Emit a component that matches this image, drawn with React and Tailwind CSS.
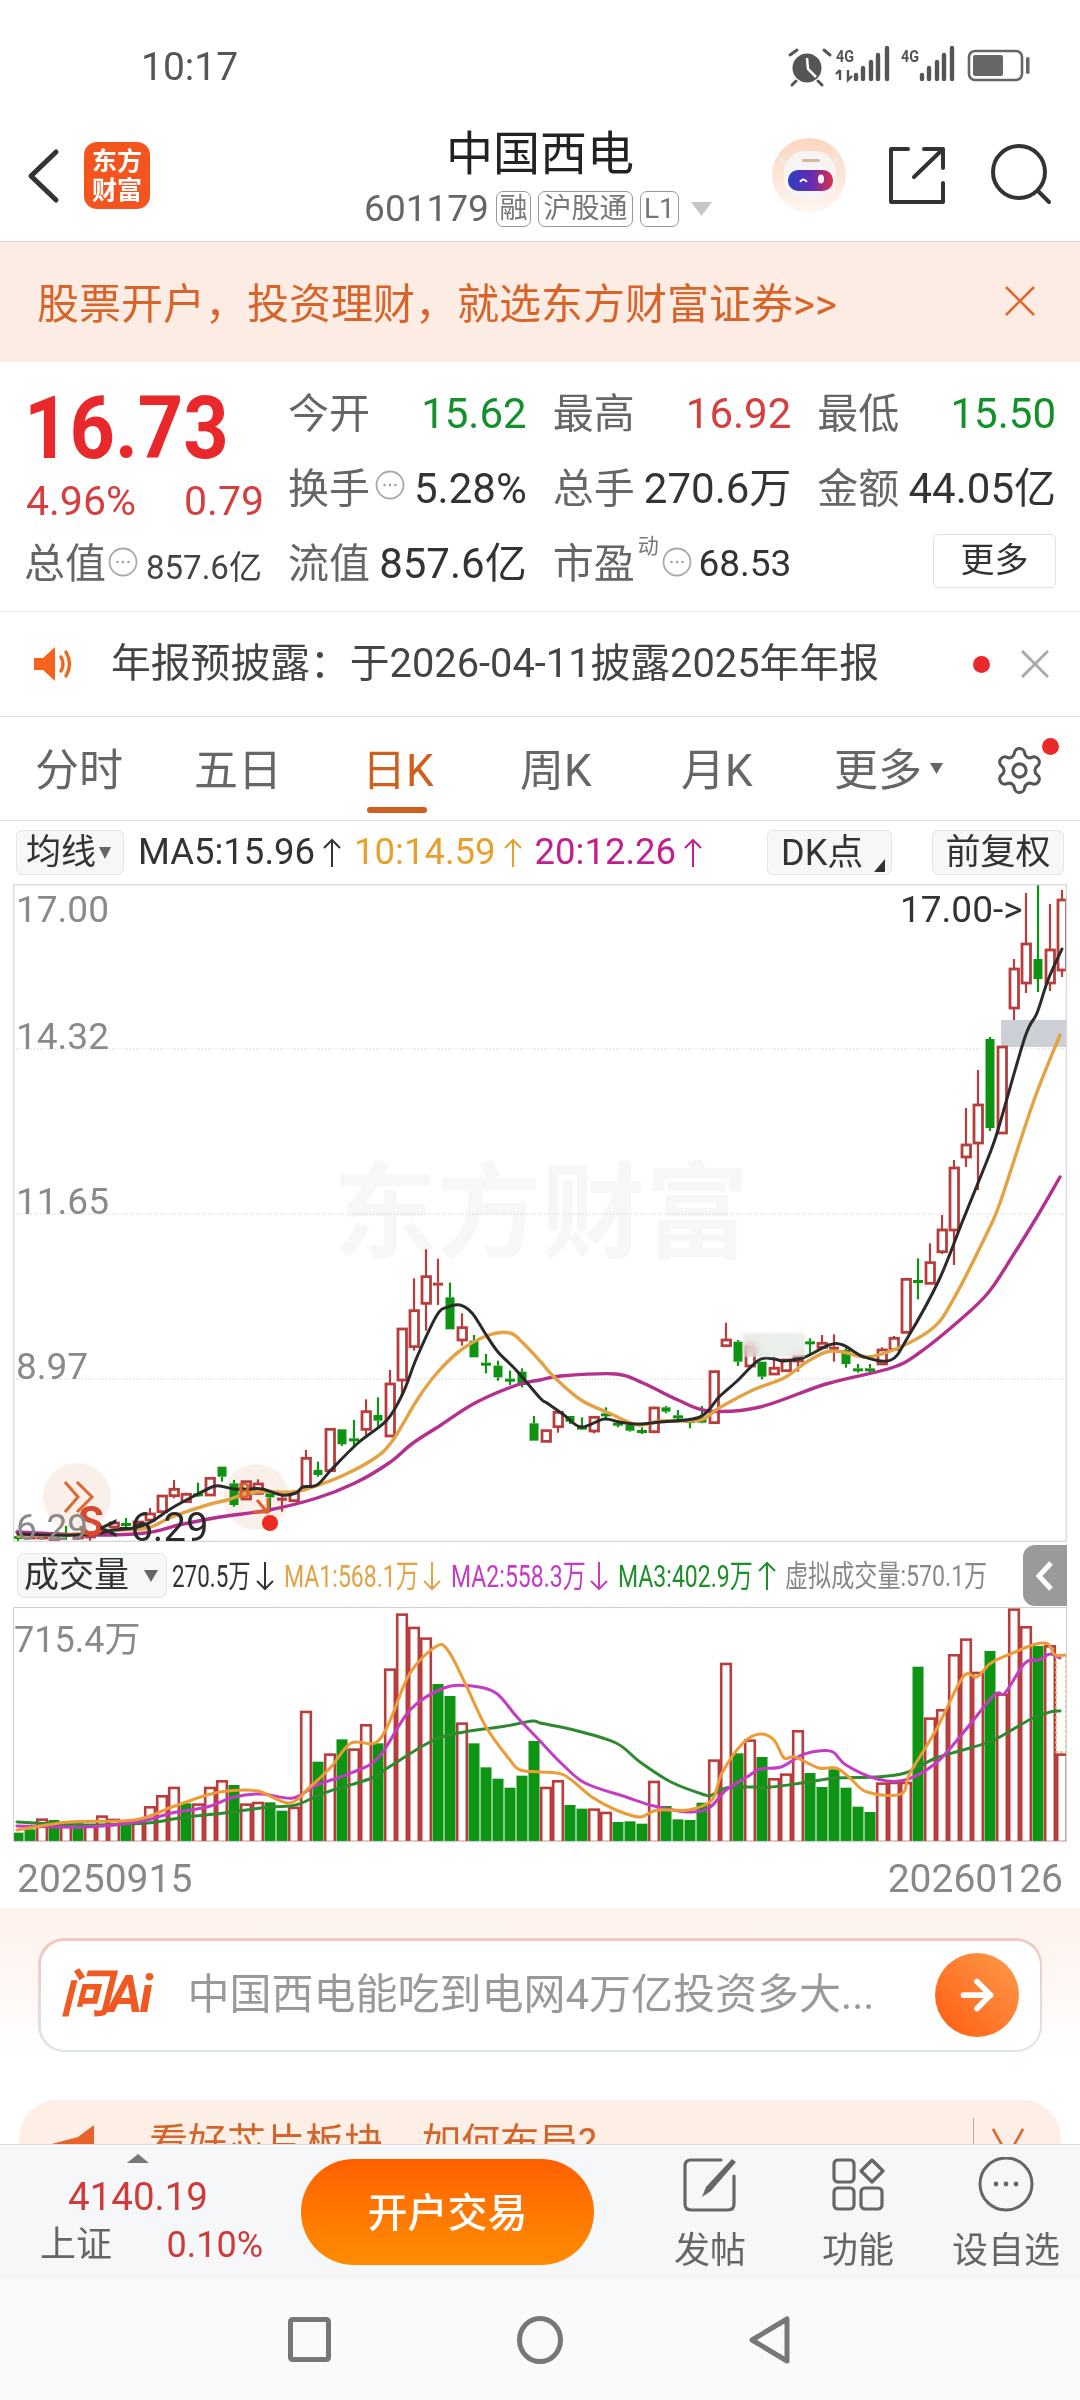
import React from "react";
import { Settings, ArrowRight } from "lucide-react";

const RED = "#b93d3c";
const GREEN = "#0d9412";
const cx = (i) => 18 + 12 * i;
const Z = (z) => 1200 + z / 3;

// [index, type, wickTop, bodyTop, bodyBottom, wickBottom] in real px
const early = [
  [0,"g",1530,1536,1538,1542],[1,"r",1532,1533,1538,1539],[2,"r",1533,1534,1538,1540],[3,"r",1533,1534,1540,1541],
  [4,"g",1526,1534,1537,1540],[5,"r",1534,1534,1538,1540],[6,"r",1533,1533,1537,1543],[7,"r",1530,1530,1534,1535],
  [8,"r",1523,1523,1527,1528],[9,"g",1518,1523,1525,1528],[10,"r",1522,1522,1527,1528],[11,"r",1508,1514,1520,1521],
];
const midZ = [
  [12,"r",888,888,935,935],[13,"r",840,868,887,895],[14,"r",878,883,905,905],[15,"g",848,880,885,890],[16,"r",835,835,885,885],
  [17,"g",800,800,830,845],[18,"g",840,850,915,920],[19,"r",845,845,897,897],[20,"r",838,852,880,885],[21,"g",880,880,892,935],
  [22,"r",880,893,900,935],[23,"r",870,878,902,905],[24,"r",750,775,860,860],[25,"g",785,810,825,830],[26,"r",688,688,812,812],
  [27,"g",688,688,733,738],[28,"g",660,715,722,740],[29,"r",598,635,688,705],[30,"g",592,645,662,680],[31,"r",510,552,708,710],
  [32,"r",387,387,540,590],[33,"r",235,332,440,452],[34,"r",148,230,310,392],[35,"r",176,248,256,315],[36,"g",248,292,388,388],
  [37,"r",340,383,420,437],[38,"g",405,422,472,472],[39,"g",462,488,492,520],[40,"g",482,497,532,542],[41,"g",512,536,540,555],
  [42,"g",505,515,555,562],[43,"g",648,670,722,722],[44,"r",692,692,724,724],[45,"r",637,637,680,698],[46,"g",648,648,665,672],
  [47,"g",652,680,684,688],[48,"r",648,652,693,700],[49,"g",622,640,645,655],[50,"g",660,668,672,682],[51,"g",672,675,692,695],
  [52,"g",682,690,694,702],[53,"r",620,624,695,700],[54,"g",618,622,635,640],[55,"g",630,646,650,660],[56,"g",655,660,663,685],
  [57,"g",618,655,668,670],[58,"r",515,515,668,668],[59,"r",368,420,437,437],[60,"g",420,425,485,498],[61,"r",440,440,498,498],
  [62,"g",485,485,530,538],[63,"r",470,505,522,522],[64,"r",480,480,512,512],[65,"r",470,470,483,515],[66,"g",415,424,428,468],
  [67,"r",405,430,442,445],[68,"r",403,440,446,485],[69,"g",445,450,492,503],[70,"g",492,505,509,518],[71,"g",492,505,509,522],
  [72,"r",442,450,492,492],[73,"r",408,415,448,448],[74,"r",238,238,397,397],[75,"g",175,240,244,298],[76,"r",130,188,250,250],
  [77,"r",45,90,155,162],
];
const late = [
  [78,"r",1160,1168,1230,1265],[79,"r",1108,1145,1157,1167],[80,"r",1070,1105,1143,1190],[81,"g",1037,1039,1128,1131],
  [82,"r",1047,1047,1133,1133],[83,"r",959,969,1008,1020],[84,"r",893,944,983,993],[85,"g",885,959,979,992],
  [86,"r",904,950,983,991],[87,"r",890,900,970,977],
];
const candles = [...early, ...midZ.map(([i, t, a, b, c, d]) => [i, t, Z(a), Z(b), Z(c), Z(d)]), ...late];

const volumes = [
  ["g",878],["g",868],["r",835],["g",840],["r",855],["g",850],["r",855],["r",826],["r",836],["g",845],["r",845],["r",798],
  ["r",765],["r",740],["g",790],["r",790],["r",740],["r",720],["g",735],["r",790],["r",785],["g",787],["g",812],["r",800],
  ["r",512],["g",665],["r",640],["g",598],["r",625],["r",552],["g",610],["r",385],["r",220],["r",260],["r",292],["g",432],
  ["g",468],["r",547],["g",610],["g",682],["g",716],["g",743],["g",707],["g",603],["r",740],["r",720],["g",795],["g",806],
  ["r",805],["r",815],["g",846],["g",844],["g",851],["r",722],["g",798],["g",838],["g",840],["g",788],["r",658],["r",368],
  ["g",640],["r",598],["g",651],["r",714],["r",700],["r",570],["g",699],["g",741],["g",688],["g",743],["g",800],["g",816],
  ["r",727],["r",725],["r",725],["g",380],["r",532],["r",507],["r",342],["r",295],["r",395],["g",333],["r",460],["r",205],
  ["r",258],["g",318],["r",315],["r",640],
];

const black = [[18,1534],[60,1535],[95,1534],[113,1530],[134,1528],[151,1522],[172,1508],[196,1495],[212,1487],[220,1486],[234,1489],[248,1489],[262,1489],[282,1495],[296,1493],[303,1487],[317,1485],[331,1470],[358,1443],[387,1420],[403,1393],[417,1357],[437,1315],[448,1307],[460,1305],[472,1313],[485,1333],[498,1352],[516,1370],[540,1398],[547,1403],[564,1415],[581,1427],[604,1419],[619,1422],[638,1424],[660,1422],[700,1417],[719,1397],[736,1382],[759,1360],[774,1359],[784,1361],[805,1357],[829,1345],[843,1345],[864,1357],[891,1360],[908,1337],[939,1280],[963,1220],[990,1153],[1000,1123],[1025,1037],[1037,1013],[1048,980],[1062,949]];
const orange = [[18,1536],[80,1534],[120,1530],[148,1528],[172,1517],[207,1505],[227,1500],[255,1492],[293,1492],[310,1488],[344,1475],[375,1458],[393,1440],[417,1400],[437,1373],[461,1350],[489,1335],[510,1333],[523,1343],[540,1361],[554,1377],[581,1400],[609,1413],[638,1425],[660,1421],[700,1420],[719,1408],[753,1390],[784,1378],[805,1363],[826,1352],[843,1352],[867,1357],[898,1348],[933,1328],[953,1300],[988,1231],[1001,1200],[1033,1103],[1060,1035]];
const magenta = [[17,1532],[90,1535],[145,1533],[179,1525],[220,1517],[269,1510],[317,1498],[355,1483],[389,1463],[413,1443],[441,1425],[475,1403],[517,1385],[540,1380],[561,1376],[616,1374],[643,1383],[678,1400],[709,1411],[760,1407],[826,1384],[891,1368],[919,1353],[960,1320],[988,1293],[1012,1257],[1035,1220],[1060,1177]];

const vOrange = [[17,1830],[69,1822],[134,1820],[172,1807],[207,1795],[227,1791],[258,1791],[289,1803],[310,1787],[331,1767],[351,1743],[375,1743],[389,1723],[410,1673],[437,1646],[449,1652],[465,1683],[486,1727],[510,1760],[520,1770],[540,1772],[564,1775],[592,1797],[616,1810],[640,1817],[657,1810],[688,1810],[712,1800],[722,1773],[743,1743],[760,1734],[774,1740],[784,1758],[795,1757],[819,1768],[836,1768],[850,1778],[867,1792],[901,1794],[910,1773],[936,1730],[963,1677],[977,1677],[991,1663],[1015,1652],[1036,1644],[1048,1644],[1055,1655],[1065,1655]];
const vMagenta = [[17,1826],[86,1827],[138,1822],[172,1813],[207,1807],[234,1797],[262,1794],[293,1798],[317,1785],[351,1773],[379,1757],[410,1710],[444,1688],[472,1686],[496,1693],[517,1717],[540,1741],[561,1763],[585,1783],[626,1797],[654,1806],[688,1812],[709,1808],[726,1790],[747,1777],[760,1769],[781,1767],[802,1755],[819,1751],[833,1752],[846,1765],[877,1779],[905,1780],[936,1763],[963,1733],[994,1695],[1005,1693],[1025,1663],[1039,1660],[1050,1654],[1060,1658]];
const vGreen = [[17,1822],[86,1825],[148,1823],[179,1818],[224,1813],[269,1807],[296,1805],[324,1793],[372,1778],[389,1767],[430,1742],[458,1733],[506,1726],[532,1721],[540,1723],[550,1725],[574,1730],[616,1743],[640,1762],[671,1782],[705,1795],[712,1795],[726,1788],[753,1787],[771,1787],[802,1783],[836,1778],[874,1777],[905,1773],[936,1758],[963,1750],[994,1740],[1029,1720],[1050,1712],[1060,1711]];

function smooth(p) {
  let d = `M${p[0][0]} ${p[0][1]}`;
  for (let i = 0; i < p.length - 1; i++) {
    const a = p[Math.max(i - 1, 0)], b = p[i], c = p[i + 1], e = p[Math.min(i + 2, p.length - 1)];
    const c1x = b[0] + (c[0] - a[0]) / 6, c1y = b[1] + (c[1] - a[1]) / 6;
    const c2x = c[0] - (e[0] - b[0]) / 6, c2y = c[1] - (e[1] - b[1]) / 6;
    d += `C${c1x.toFixed(1)} ${c1y.toFixed(1)} ${c2x.toFixed(1)} ${c2y.toFixed(1)} ${c[0]} ${c[1]}`;
  }
  return d;
}

function Line({ pts, color, w = 3.4 }) {
  return <path d={smooth(pts)} fill="none" stroke={color} strokeWidth={w} strokeLinecap="round" strokeLinejoin="round" />;
}

function Candle({ c }) {
  const [i, t, wt, bt, bb, wb] = c;
  const x = cx(i);
  const color = t === "r" ? RED : GREEN;
  const thin = bb - bt < 4;
  return (
    <g>
      <line x1={x} x2={x} y1={wt} y2={Math.max(bt, wt)} stroke={color} strokeWidth="2.2" />
      <line x1={x} x2={x} y1={bb} y2={wb} stroke={color} strokeWidth="2.2" />
      {thin ? (
        <rect x={x - 5} y={bt} width="10" height={Math.max(bb - bt, 3)} fill={color} />
      ) : t === "r" ? (
        <rect x={x - 4} y={bt} width="8.5" height={bb - bt} fill="#fff" stroke={color} strokeWidth="2.8" />
      ) : (
        <rect x={x - 4.5} y={bt} width="9" height={bb - bt} fill={color} />
      )}
    </g>
  );
}

function PriceSvg() {
  return (
    <svg className="absolute left-0 top-0" width="1054" height="658" viewBox="13 884 1054 658">
      {[1049, 1214, 1379].map((y) => (
        <line key={y} x1="13" x2="1067" y1={y} y2={y} stroke="#cccccc" strokeWidth="1.2" strokeDasharray="1 2" />
      ))}
      <circle cx="77" cy="1497" r="34" fill="#fbefe9" />
      <circle cx="256" cy="1497" r="33" fill="#fbefe9" />
      <path d="M65 1482L78 1497L65 1512M77 1482L92 1497L77 1512" fill="none" stroke="#d96a33" strokeWidth="3" />
      <rect x="1001" y="1020" width="66" height="27" fill="#ccd0d6" />
      {candles.map((c) => <Candle key={c[0]} c={c} />)}
      <Line pts={magenta} color="#b3308f" />
      <Line pts={orange} color="#e3a244" />
      <Line pts={black} color="#2a2a2a" w={3} />
      <path d="M257 1500L268 1513M253 1512H268V1498" fill="none" stroke="#e0602a" strokeWidth="3" />
      <circle cx="270" cy="1523" r="8" fill="#ee2a22" />
      <rect x="13.5" y="884.5" width="1053" height="657" fill="none" stroke="#d8d8d8" strokeWidth="1.6" />
    </svg>
  );
}

function VolumeSvg() {
  const yb = 1842;
  return (
    <svg className="absolute left-0 top-0" width="1054" height="235" viewBox="13 1607 1054 235">
      {volumes.map(([t, z], i) => {
        const top = 1540 + z / 3;
        const x = cx(i);
        return t === "g" ? (
          <rect key={i} x={x - 5.5} y={top} width="11" height={yb - top} fill={GREEN} />
        ) : (
          <rect key={i} x={x - 4.8} y={top + 1.3} width="9.6" height={yb - top - 1.3} fill="#fff" stroke={RED} strokeWidth="2.6" />
        );
      })}
      <rect x="1056" y="1655" width="10" height="97" fill="none" stroke="#e8b25a" strokeWidth="1.5" strokeDasharray="3 2" />
      <Line pts={vGreen} color="#2f8a2f" w={3} />
      <Line pts={vMagenta} color="#c43cc4" w={3} />
      <Line pts={vOrange} color="#ee9a35" w={3} />
      <rect x="13.5" y="1607.5" width="1053" height="234" fill="none" stroke="#cfcfcf" strokeWidth="1.2" />
    </svg>
  );
}

function StatusIcons() {
  const bars1 = [[856, 75], [863, 68], [871, 62], [878, 55], [887, 48]];
  const bars2 = [[922, 75], [929, 68], [937, 62], [944, 55], [952, 48]];
  return (
    <svg className="shrink-0" width="260" height="50" viewBox="780 40 260 50">
      <circle cx="807" cy="68" r="14.5" fill="#555" />
      <path d="M807 58L808 69L816 77" fill="none" stroke="#fff" strokeWidth="2.5" />
      <path d="M790 55L797 50M824 50L830 55M796 81L792 85M818 81L822 85" stroke="#555" strokeWidth="3" strokeLinecap="round" />
      <text x="836" y="62" fontSize="17" fontWeight="700" fill="#555" textLength="18" lengthAdjust="spacingAndGlyphs" fontFamily="Roboto">4G</text>
      <text x="901" y="62" fontSize="17" fontWeight="700" fill="#555" textLength="18" lengthAdjust="spacingAndGlyphs" fontFamily="Roboto">4G</text>
      <path d="M840 70V80M836 74L840 70M848 70V80L852 76" fill="none" stroke="#555" strokeWidth="2.4" />
      {[...bars1, ...bars2].map(([x, y]) => (
        <line key={x} x1={x} x2={x} y1={y} y2="79" stroke="#555" strokeWidth="4.4" strokeLinecap="round" />
      ))}
      <rect x="969" y="51" width="53" height="29" rx="6" fill="none" stroke="#666" strokeWidth="2.6" />
      <rect x="973" y="55" width="30" height="21" rx="2" fill="#666" />
      <rect x="1026" y="57" width="3.5" height="17" rx="1.7" fill="#666" />
    </svg>
  );
}

function Robot() {
  return (
    <svg className="shrink-0" width="76" height="76" viewBox="771 137 76 76">
      <defs>
        <linearGradient id="rbg" x1="0" y1="0" x2="0" y2="1">
          <stop offset="0" stopColor="#fbd6bf" />
          <stop offset="1" stopColor="#fef6f1" />
        </linearGradient>
        <linearGradient id="vis" x1="0" y1="0" x2="1" y2="0">
          <stop offset="0" stopColor="#2c3fc0" />
          <stop offset="0.55" stopColor="#6a2ab0" />
          <stop offset="1" stopColor="#e0304a" />
        </linearGradient>
      </defs>
      <circle cx="809" cy="175" r="37" fill="url(#rbg)" />
      <path d="M780 158L787 167M838 158L831 167" stroke="#eeeae8" strokeWidth="4" />
      <rect x="784" y="151" width="52" height="48" rx="21" fill="#f7f5f4" />
      <rect x="802" y="159" width="18" height="3" rx="1.5" fill="#d8b49a" />
      <rect x="788" y="170" width="45" height="21" rx="10" fill="url(#vis)" />
      <path d="M800 182Q803 177 807 182" fill="none" stroke="#fff" strokeWidth="1.8" />
      <ellipse cx="821" cy="179" rx="3" ry="4.5" fill="#fff" />
    </svg>
  );
}

function Dots({ cls = "w-[30px] h-[30px]" }) {
  return (
    <svg className={`shrink-0 ${cls}`} viewBox="0 0 30 30">
      <circle cx="15" cy="15" r="13.5" fill="none" stroke="#aaa" strokeWidth="1.8" />
      <circle cx="9.5" cy="15" r="1.2" fill="#999" />
      <circle cx="15" cy="15" r="1.2" fill="#999" />
      <circle cx="20.5" cy="15" r="1.2" fill="#999" />
    </svg>
  );
}

function Arrow({ color, up = true, cls = "" }) {
  return (
    <svg className={`shrink-0 ${cls}`} width="20" height="30" viewBox="0 0 20 30">
      {up ? (
        <path d="M10 29V2M2 10L10 2L18 10" fill="none" stroke={color} strokeWidth="2" />
      ) : (
        <path d="M10 1V28M2 20L10 28L18 20" fill="none" stroke={color} strokeWidth="2" />
      )}
    </svg>
  );
}

function Stat({ label, value, color = "text-[#333]", icon = false, size = "text-[42px]" }) {
  return (
    <div className="flex h-[75px] items-center justify-between">
      <div className="flex items-start">
        <span className="whitespace-nowrap text-[41px] leading-[50px] text-[#666]">{label}</span>
        {icon && <Dots cls="w-[30px] h-[30px] ml-[5px] mt-[6px]" />}
      </div>
      <span className={`whitespace-nowrap leading-[50px] ${size} ${color}`}>{value}</span>
    </div>
  );
}

function Badge({ children, cls }) {
  return (
    <span className={`flex h-[36px] items-center justify-center rounded-[7px] border border-[#999] text-[28px] leading-none text-[#777] ${cls}`}>
      {children}
    </span>
  );
}

function Condensed({ w, children, color, scale = "scale-x-[0.72]", size = "text-[32px]", cls = "" }) {
  return (
    <span className={`block shrink-0 ${cls}`} style={{ width: w }}>
      <span className={`inline-block origin-left whitespace-nowrap leading-[40px] ${scale} ${size} ${color}`}>{children}</span>
    </span>
  );
}

export default function App() {
  return (
    <div className="flex h-[2400px] w-[1080px] flex-col overflow-hidden bg-white [font-family:Roboto,'Noto_Sans_CJK_SC',sans-serif]">
      {/* status bar */}
      <div className="flex h-[126px] shrink-0 items-start justify-between pl-[141px] pr-[40px] pt-[40px]">
        <span className="pt-[4px] text-[39px] leading-[46px] text-[#555]">10:17</span>
        <StatusIcons />
      </div>

      {/* header */}
      <div className="flex h-[116px] shrink-0 border-b border-[#d9d9d9]">
        <div className="flex w-[240px] shrink-0 items-center pb-[16px] pl-[27px]">
          <svg className="shrink-0" width="33" height="56" viewBox="0 0 33 56">
            <path d="M29 4L4 28L29 52" fill="none" stroke="#333" strokeWidth="5" strokeLinecap="round" strokeLinejoin="round" />
          </svg>
          <div className="ml-[24px] flex h-[67px] w-[66px] shrink-0 flex-col items-center justify-center rounded-[13px] bg-[#f4551e] text-[25px] font-bold leading-[29px] text-white">
            <span>东方</span>
            <span>财富</span>
          </div>
        </div>
        <div className="flex w-[600px] shrink-0 flex-col items-center">
          <span className="text-[47px] leading-[56px] text-[#222]">中国西电</span>
          <div className="mt-[9px] flex -translate-x-[2px] items-center">
            <span className="text-[37px] leading-[36px] text-[#666]">601179</span>
            <Badge cls="ml-[7px] w-[35px]">融</Badge>
            <Badge cls="ml-[7px] w-[95px]">沪股通</Badge>
            <Badge cls="ml-[7px] w-[39px]">L1</Badge>
            <svg className="ml-[12px] shrink-0" width="21" height="14" viewBox="0 0 21 14"><path d="M0 0H21L10.5 14Z" fill="#c6c6c6" /></svg>
          </div>
        </div>
        <div className="-ml-[69px] flex w-[309px] shrink-0 items-start pt-[11px]">
          <Robot />
          <svg className="ml-[40px] mt-[9px] shrink-0" width="60" height="60" viewBox="887 146 60 60">
            <path d="M908 149H891V202H943V183M914 177L943 149M924 149H943V168" fill="none" stroke="#333" strokeWidth="4" strokeLinecap="round" strokeLinejoin="round" />
          </svg>
          <svg className="ml-[43px] mt-[6px] shrink-0" width="62" height="62" viewBox="990 143 62 62">
            <circle cx="1019" cy="172" r="26" fill="none" stroke="#333" strokeWidth="4" />
            <path d="M1038 191L1049 202" stroke="#333" strokeWidth="4" strokeLinecap="round" />
          </svg>
        </div>
      </div>

      {/* banner */}
      <div className="flex h-[120px] shrink-0 items-center justify-between bg-[#fcece4] pl-[37px] pr-[44px] pt-[5px]">
        <span className="whitespace-nowrap text-[42px] leading-[50px] text-[#d9642a]">股票开户，投资理财，就选东方财富证券&gt;&gt;</span>
        <svg className="mb-[8px] shrink-0" width="32" height="32" viewBox="0 0 32 32">
          <path d="M2 2L30 30M30 2L2 30" stroke="#e0682e" strokeWidth="2.6" />
        </svg>
      </div>

      {/* quote */}
      <div className="flex h-[250px] shrink-0 items-start border-b border-[#e4e4e4] pl-[26px] pt-[14px]">
        <div className="w-[262px] shrink-0">
          <div className="-ml-[2px] mt-[5px] h-[94px] origin-left scale-x-[0.9] whitespace-nowrap text-[88px] font-bold leading-[94px] text-[#e8282a]">16.73</div>
          <div className="mt-[4px] flex w-[238px] justify-between text-[41px] leading-[44px] text-[#d43f3f]">
            <span>4.96%</span>
            <span>0.79</span>
          </div>
          <div className="-ml-[2px] mt-[16px] flex items-start">
            <span className="text-[41px] leading-[50px] text-[#666]">总值</span>
            <Dots cls="w-[30px] h-[30px] ml-[2px] mt-[8px]" />
            <span className="ml-[8px] mt-[4px] whitespace-nowrap text-[33px] leading-[50px] text-[#444]">857.6亿</span>
          </div>
        </div>
        <div className="grid w-[768px] shrink-0 grid-cols-3 content-start gap-x-[26px]">
          <Stat label="今开" value="15.62" color="text-[#12912b]" />
          <Stat label="最高" value="16.92" color="text-[#d44040]" />
          <Stat label="最低" value="15.50" color="text-[#12912b]" />
          <Stat label="换手" value="5.28%" icon />
          <Stat label="总手" value="270.6万" />
          <Stat label="金额" value="44.05亿" />
          <Stat label="流值" value="857.6亿" />
          <div className="flex h-[75px] items-center justify-between">
            <div className="flex items-start">
              <span className="text-[41px] leading-[50px] text-[#666]">市盈</span>
              <span className="-mt-[7px] ml-[3px] text-[21px] leading-[28px] text-[#777]">动</span>
              <Dots cls="w-[30px] h-[30px] ml-[3px] mt-[8px]" />
            </div>
            <span className="text-[37px] leading-[50px] text-[#333]">68.53</span>
          </div>
          <div className="-mt-[3px] flex h-[75px] items-center justify-end">
            <span className="flex h-[54px] w-[123px] items-center justify-center rounded-[5px] border border-[#e2e2e2] text-[34px] text-[#333]">更多</span>
          </div>
        </div>
      </div>

      {/* notice */}
      <div className="flex h-[105px] shrink-0 items-center border-b border-[#dedede] pl-[34px] pr-[31px]">
        <svg className="shrink-0" width="44" height="36" viewBox="0 0 44 36">
          <path d="M0 12H9L21 1V35L9 24H0Z" fill="#f4641d" />
          <path d="M27 11Q31 18 27 25M32 6Q39 18 32 30" fill="none" stroke="#f4641d" strokeWidth="3.4" strokeLinecap="round" />
        </svg>
        <span className="ml-[33px] whitespace-nowrap text-[39.8px] leading-[50px] text-[#444]">年报预披露：于2026-04-11披露2025年年报</span>
        <span className="ml-auto h-[17px] w-[17px] shrink-0 rounded-full bg-[#e82a2a]" />
        <svg className="ml-[31px] shrink-0" width="28" height="28" viewBox="0 0 28 28">
          <path d="M1 1L27 27M27 1L1 27" stroke="#aaa" strokeWidth="3" />
        </svg>
      </div>

      {/* tabs */}
      <div className="flex h-[104px] shrink-0 border-b border-[#dedede] pl-[35px] pt-[23px] text-[44px] leading-[62px] text-[#666]">
        <span className="w-[159px] shrink-0">分时</span>
        <span className="w-[168px] shrink-0">五日</span>
        <div className="flex w-[158px] shrink-0 flex-col items-start">
          <span className="text-[#cf5f1e]">日K</span>
          <span className="ml-[5px] mt-[5px] h-[6px] w-[60px] rounded-full bg-[#cf5f1e]" />
        </div>
        <span className="w-[161px] shrink-0">周K</span>
        <span className="w-[153px] shrink-0">月K</span>
        <span className="whitespace-nowrap">更多</span>
        <svg className="ml-[8px] mt-[23px] shrink-0" width="13" height="11" viewBox="0 0 13 11"><path d="M0 0H13L6.5 11Z" fill="#666" /></svg>
        <div className="relative ml-[50px] mt-[4px] h-[52px] w-[52px] shrink-0">
          <Settings size={53} strokeWidth={1.4} color="#555" />
          <span className="absolute -right-[14px] -top-[6px] h-[17px] w-[17px] rounded-full bg-[#e82a2a]" />
        </div>
      </div>

      {/* MA row */}
      <div className="flex h-[63px] shrink-0 items-start pl-[16px] pt-[9px]">
        <div className="flex h-[45px] w-[108px] shrink-0 items-center rounded-[6px] border border-[#e2e4e8] bg-[#f6f7f9] pl-[9px]">
          <span className="text-[35px] leading-none text-[#333]">均线</span>
          <svg className="ml-[3px] shrink-0" width="12" height="12" viewBox="0 0 12 12"><path d="M0 0H12L6 12Z" fill="#666" /></svg>
        </div>
        <div className="ml-[14px] flex h-[45px] shrink-0 items-center text-[36.5px] leading-none">
          <span className="text-[#333]">MA5:15.96</span>
          <Arrow color="#333" cls="ml-[7px]" />
          <span className="ml-[12px] text-[#e8a02c]">10:14.59</span>
          <Arrow color="#e8a02c" cls="ml-[7px]" />
          <span className="ml-[12px] text-[#c0208f]">20:12.26</span>
          <Arrow color="#c0208f" cls="ml-[7px]" />
        </div>
        <div className="relative ml-auto flex h-[45px] w-[125px] shrink-0 items-center rounded-[6px] border border-[#e2e4e8] bg-[#f6f7f9] pl-[13px] text-[36px] leading-none text-[#333]">
          DK点
          <svg className="absolute bottom-[2px] right-[6px]" width="11" height="13" viewBox="0 0 11 13"><path d="M11 0V13H0Z" fill="#333" /></svg>
        </div>
        <div className="ml-[40px] mr-[16px] flex h-[45px] w-[132px] shrink-0 items-center justify-center rounded-[6px] border border-[#e2e4e8] bg-[#f6f7f9] text-[35px] leading-none text-[#333]">
          前复权
        </div>
      </div>

      {/* price chart */}
      <div className="relative ml-[13px] h-[658px] w-[1054px] shrink-0 leading-none">
        <span className="absolute left-[320px] top-[274px] whitespace-nowrap text-[104px] font-bold leading-[114px] text-[#f7f7f7]">东方财富</span>
        <PriceSvg />
        <span className="absolute left-[3px] top-[4px] text-[37px] leading-[44px] text-[#8a8a8a]">17.00</span>
        <span className="absolute left-[3px] top-[131px] text-[37px] leading-[44px] text-[#8a8a8a]">14.32</span>
        <span className="absolute left-[3px] top-[296px] text-[37px] leading-[44px] text-[#8a8a8a]">11.65</span>
        <span className="absolute left-[3px] top-[461px] text-[37px] leading-[44px] text-[#8a8a8a]">8.97</span>
        <span className="absolute left-[65px] top-[613px] text-[42px] font-bold leading-[50px] text-[#d8492c]">S</span>
        <span className="absolute left-[86px] top-[620px] whitespace-nowrap text-[40px] leading-[48px] text-[#2a2a2a]">&lt;-6.29</span>
        <span className="absolute left-[3px] top-[622px] text-[37px] leading-[44px] text-[#8a8a8a]">6.29</span>
        <span className="absolute left-[887px] top-[1px] whitespace-nowrap text-[37px] leading-[50px] text-[#333]">17.00-&gt;</span>
        <span className="absolute left-[225px] top-[595px] text-[20px] font-bold leading-[24px] text-[#e0602a]">B</span>
        <span className="absolute left-[730px] top-[449px] h-[24px] w-[62px] bg-[#d8e0d8]/50 blur-[1px] backdrop-blur-[4px]" />
      </div>

      {/* volume header */}
      <div className="relative flex h-[65px] shrink-0 items-start pl-[17px] pt-[11px]">
        <div className="flex h-[45px] w-[150px] shrink-0 items-center rounded-[7px] border border-[#e2e4e8] bg-[#f6f7f9] pl-[6px]">
          <span className="text-[35px] leading-none text-[#333]">成交量</span>
          <svg className="ml-[15px] shrink-0" width="14" height="12" viewBox="0 0 14 12"><path d="M0 0H14L7 12Z" fill="#666" /></svg>
        </div>
        <div className="ml-[5px] flex h-[45px] items-center">
          <Condensed w={83} scale="scale-x-[0.7]" color="text-[#333]">270.5万</Condensed>
          <Arrow color="#333" up={false} />
          <Condensed w={138} cls="ml-[9px]" color="text-[#e3a244]">MA1:568.1万</Condensed>
          <Arrow color="#e3a244" up={false} />
          <Condensed w={138} cls="ml-[9px]" color="text-[#c43cc4]">MA2:558.3万</Condensed>
          <Arrow color="#c43cc4" up={false} />
          <Condensed w={139} cls="ml-[9px]" color="text-[#1f8f2a]">MA3:402.9万</Condensed>
          <Arrow color="#1f8f2a" />
          <Condensed w={210} cls="ml-[8px]" scale="scale-x-[0.77]" size="text-[30px]" color="text-[#888]">虚拟成交量:570.1万</Condensed>
        </div>
        <div className="absolute right-[13px] top-[3px] flex h-[61px] w-[44px] items-center justify-center rounded-l-[12px] bg-[#9a9a9a]">
          <svg width="20" height="32" viewBox="0 0 20 32"><path d="M16 3L4 16L16 29" fill="none" stroke="#fff" strokeWidth="5" /></svg>
        </div>
      </div>

      {/* volume chart */}
      <div className="relative ml-[13px] h-[235px] w-[1054px] shrink-0">
        <VolumeSvg />
        <span className="absolute left-[1px] top-[11px] whitespace-nowrap text-[36px] leading-[44px] text-[#8a8a8a]">715.4万</span>
      </div>

      {/* dates */}
      <div className="flex h-[66px] shrink-0 justify-between pl-[17px] pr-[17px] pt-[15px] text-[39px] leading-[44px] text-[#888]">
        <span>20250915</span>
        <span>20260126</span>
      </div>

      {/* ask section */}
      <div className="h-[236px] shrink-0 overflow-hidden bg-gradient-to-b from-[#fdf1ec] to-white to-[65%] pt-[30px]">
        <div className="mx-[38px] h-[114px] rounded-[26px] bg-gradient-to-b from-[#f3c8bc] to-[#dde4ee] p-[2.5px]">
          <div className="flex h-full items-center rounded-[24px] bg-white pl-[19px] pr-[21px]">
            <span className="w-[112px] shrink-0 whitespace-nowrap text-[52px] font-bold italic leading-none tracking-[-3px] text-[#f05a22]">问Ai</span>
            <span className="ml-[16px] whitespace-nowrap text-[42px] leading-[50px] text-[#999]">中国西电能吃到电网4万亿投资多大...</span>
            <span className="ml-auto flex h-[84px] w-[84px] shrink-0 items-center justify-center rounded-full bg-gradient-to-tr from-[#ff5a00] to-[#ff9a4a]">
              <ArrowRight size={46} strokeWidth={3} color="#fff" />
            </span>
          </div>
        </div>
        <div className="mx-[19px] mt-[48px] flex h-[120px] rounded-t-[38px] bg-[#fdeee6] pl-[29px] pr-[37px] pt-[18px]">
          <svg className="mt-[7px] shrink-0" width="46" height="40" viewBox="0 0 46 40"><path d="M0 20L30 12L46 0V40H0Z" fill="#e8622a" /></svg>
          <span className="ml-[55px] whitespace-nowrap text-[39px] leading-[50px] text-[#d4652a]">看好芯片板块，如何布局?</span>
          <span className="ml-auto h-[50px] w-px bg-[#b9a79e]" />
          <svg className="ml-[18px] mt-[10px] shrink-0" width="32" height="32" viewBox="0 0 32 32"><path d="M1 1L16 28L31 1" fill="none" stroke="#e0682e" strokeWidth="2.6" /></svg>
        </div>
      </div>

      {/* bottom bar */}
      <div className="flex h-[135px] shrink-0 items-start border-t border-[#dcdcdc] bg-[#f6f7f9]">
        <div className="w-[301px] shrink-0 pl-[40px] pt-[9px]">
          <div className="ml-[3px] flex w-[190px] justify-center">
            <svg width="22" height="9" viewBox="0 0 22 9"><path d="M0 9L11 0L22 9Z" fill="#777" /></svg>
          </div>
          <div className="ml-[3px] mt-[12px] w-[190px] text-center text-[38.5px] leading-[44px] text-[#cf3a3a]">4140.19</div>
          <div className="mt-[4px] flex w-[223px] items-center justify-between leading-[44px]">
            <span className="text-[36px] text-[#666]">上证</span>
            <span className="text-[36px] text-[#cf3a3a]">0.10%</span>
          </div>
        </div>
        <div className="mt-[14px] flex h-[106px] w-[293px] shrink-0 items-center justify-center rounded-full bg-gradient-to-b from-[#ff5f00] to-[#ff8c00] pt-[3px] text-[40px] font-medium leading-none text-white">
          开户交易
        </div>
        <div className="ml-[42px] flex w-[148px] shrink-0 flex-col items-center pt-[12px]">
          <svg width="56" height="56" viewBox="683 2156 56 56">
            <path d="M722 2159H692Q686 2159 686 2165V2203Q686 2209 692 2209H729Q735 2209 735 2203V2175" fill="none" stroke="#666" strokeWidth="3.2" strokeLinecap="round" />
            <path d="M733 2158L737 2161L712 2190L703 2196L707 2186Z" fill="#666" />
          </svg>
          <span className="mt-[21px] text-[36px] leading-[34px] text-[#666]">发帖</span>
        </div>
        <div className="flex w-[148px] shrink-0 flex-col items-center pt-[12px]">
          <svg width="56" height="56" viewBox="830 2156 56 56">
            <rect x="834" y="2159" width="20" height="22" rx="4" fill="none" stroke="#666" strokeWidth="3.2" />
            <path d="M872 2159L883 2170L872 2181L861 2170Z" fill="none" stroke="#666" strokeWidth="3.2" strokeLinejoin="round" />
            <rect x="834" y="2187" width="20" height="21" rx="4" fill="none" stroke="#666" strokeWidth="3.2" />
            <rect x="861" y="2187" width="21" height="21" rx="4" fill="none" stroke="#666" strokeWidth="3.2" />
          </svg>
          <span className="mt-[21px] text-[36px] leading-[34px] text-[#666]">功能</span>
        </div>
        <div className="flex w-[148px] shrink-0 flex-col items-center pt-[12px]">
          <svg width="56" height="56" viewBox="0 0 56 56">
            <circle cx="28" cy="27" r="26" fill="none" stroke="#666" strokeWidth="3" />
            <circle cx="18" cy="27" r="2.4" fill="#666" />
            <circle cx="28" cy="27" r="2.4" fill="#666" />
            <circle cx="38" cy="27" r="2.4" fill="#666" />
          </svg>
          <span className="mt-[21px] whitespace-nowrap text-[36px] leading-[34px] text-[#666]">设自选</span>
        </div>
      </div>

      {/* nav bar */}
      <div className="flex h-[121px] shrink-0 items-center justify-center gap-[186px] bg-[#fafafa] pr-[3px]">
        <svg width="43" height="45" viewBox="0 0 43 45"><rect x="2.5" y="2.5" width="38" height="40" rx="2" fill="none" stroke="#777" strokeWidth="5" /></svg>
        <svg width="46" height="48" viewBox="0 0 46 48"><ellipse cx="23" cy="24" rx="20.5" ry="21.5" fill="none" stroke="#777" strokeWidth="5" /></svg>
        <svg width="41" height="48" viewBox="0 0 41 48"><path d="M38 3V45L3 24Z" fill="none" stroke="#777" strokeWidth="5" strokeLinejoin="round" /></svg>
      </div>
    </div>
  );
}
